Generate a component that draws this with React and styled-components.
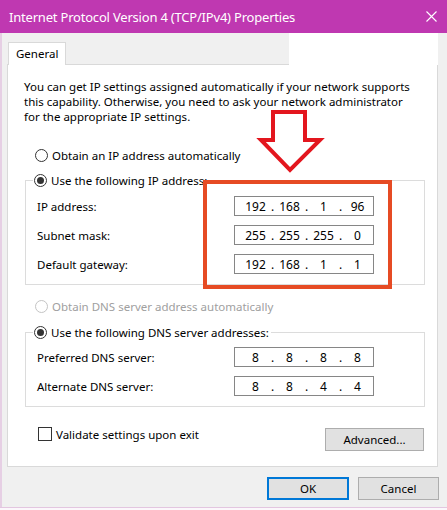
import React from "react";
import styled, { createGlobalStyle } from "styled-components";

const GlobalStyle = createGlobalStyle`
  html, body { margin: 0; padding: 0; background: #fbf7fb; }
  body {
    font-family: "Noto Sans", "Open Sans", sans-serif;
    font-size: 11.5px;
    color: #000;
  }
  * { box-sizing: border-box; }
`;

const Window = styled.div`
  position: relative;
  width: 447px;
  height: 508px;
  background: #f0f0f0;
  border-bottom: 1px solid #e3c6e0;
  display: flex;
  flex-direction: column;
`;

const TitleBar = styled.div`
  height: 33px;
  flex-shrink: 0;
  background: #bf38b1;
  color: #fff;
  display: flex;
  align-items: center;
  justify-content: space-between;
  padding: 0 10px 0 9px;
  font-size: 13px;
  letter-spacing: -0.2px;
`;

const Body = styled.div`
  flex: 1;
  border-left: 2px solid #e6cfe4;
  padding: 0 9px 0 5px;
  display: flex;
  flex-direction: column;
`;

const TabRow = styled.div`
  height: 31px;
  display: flex;
  align-items: flex-end;
`;

const Tab = styled.div`
  position: relative;
  z-index: 1;
  margin: 0 0 -1px 1px;
  height: 23px;
  width: 58px;
  padding: 3px 0 0 7px;
  background: #fff;
  border: 1px solid #d9d9d9;
  border-bottom: none;
`;

const TabFill = styled.div`
  flex: 1;
`;

const WhitePatch = styled.div`
  position: relative;
  z-index: 1;
  align-self: stretch;
  width: 149px;
  margin-bottom: -1px;
  background: #fff;
`;

const Panel = styled.div`
  height: 403px;
  background: #fff;
  border: 1px solid #d9d9d9;
  padding: 14px 13px 0 16px;
  display: flex;
  flex-direction: column;
`;

const Intro = styled.p`
  margin: 0;
  line-height: 15px;
  span { display: block; white-space: nowrap; }
`;

const RadioRow = styled.div`
  display: flex;
  align-items: center;
  gap: 4px;
  height: 16px;
  margin: ${(p) => p.$mt}px 0 0 11px;
  color: ${(p) => (p.$disabled ? "#a0a0a0" : "#000")};
`;

const RadioDot = styled.span`
  width: 13px;
  height: 13px;
  border-radius: 50%;
  border: 1px solid ${(p) => (p.$disabled ? "#c4c4c4" : "#333")};
  background: #fff;
  display: flex;
  align-items: center;
  justify-content: center;
  &::after {
    content: "";
    width: 7px;
    height: 7px;
    border-radius: 50%;
    background: ${(p) => (p.$checked ? "#333" : "transparent")};
  }
`;

const Group = styled.fieldset`
  margin: ${(p) => p.$mt}px 0 0 1px;
  width: 400px;
  border: 1px solid #dcdcdc;
  padding: ${(p) => p.$pt}px 49px 10px 11px;
  min-width: 0;
`;

const Legend = styled.legend`
  display: flex;
  align-items: center;
  gap: 4px;
  height: 16px;
  padding: 0 2px 0 1px;
  margin-left: -4px;
`;

const Fields = styled.div`
  display: grid;
  grid-template-columns: 197px 140px;
  grid-auto-rows: 20px;
  row-gap: 9px;
  align-items: center;
`;

const IpBox = styled.div`
  height: 20px;
  border: 1px solid #868686;
  background: #fff;
  display: flex;
  align-items: center;
  padding-left: 8px;
  font-size: 12px;
`;

const Octet = styled.span`
  width: 25px;
  text-align: center;
`;

const Dot = styled.span`
  width: 9px;
  text-align: center;
`;

const BottomRow = styled.div`
  margin-top: 21px;
  display: flex;
  justify-content: space-between;
  align-items: flex-start;
  padding-left: 14px;
`;

const CheckRow = styled.label`
  margin-top: -1px;
  display: flex;
  align-items: center;
  gap: 4px;
  height: 14px;
`;

const CheckBox = styled.span`
  width: 14px;
  height: 14px;
  border: 1px solid #333;
  background: #fff;
`;

const Button = styled.button`
  width: ${(p) => p.$w}px;
  height: 23px;
  background: #e1e1e1;
  border: ${(p) => (p.$default ? "2px solid #0078d7" : "1px solid #adadad")};
  font: inherit;
  color: #000;
  padding: 0;
`;

const Footer = styled.div`
  display: flex;
  justify-content: flex-end;
  gap: 9px;
  padding-top: 10px;
  margin-right: -1px;
`;

const RedBox = styled.div`
  position: absolute;
  left: 203px;
  top: 180px;
  width: 189px;
  height: 109px;
  border: 4px solid #e64b24;
`;

const ArrowSvg = styled.svg`
  position: absolute;
  left: 255px;
  top: 105px;
`;

const Radio = ({ checked, disabled }) => (
  <RadioDot $checked={checked} $disabled={disabled} />
);

const IpField = ({ value }) => {
  const parts = value.split(".");
  return (
    <IpBox>
      {parts.map((p, i) => (
        <React.Fragment key={i}>
          <Octet>{p}</Octet>
          {i < 3 && <Dot>.</Dot>}
        </React.Fragment>
      ))}
    </IpBox>
  );
};

export default function App() {
  return (
    <>
      <GlobalStyle />
      <Window>
        <TitleBar>
          <span>Internet Protocol Version 4 (TCP/IPv4) Properties</span>
          <svg width="11" height="11" viewBox="0 0 11 11">
            <path d="M0.5 0.5 L10.5 10.5 M10.5 0.5 L0.5 10.5" stroke="#fff" strokeWidth="1.1" />
          </svg>
        </TitleBar>
        <Body>
          <TabRow>
            <Tab>General</Tab>
            <TabFill />
            <WhitePatch />
          </TabRow>
          <Panel>
            <Intro>
              <span>You can get IP settings assigned automatically if your network supports</span>
              <span>this capability. Otherwise, you need to ask your network administrator</span>
              <span>for the appropriate IP settings.</span>
            </Intro>
            <RadioRow $mt={23}>
              <Radio />
              Obtain an IP address automatically
            </RadioRow>
            <Group $mt={9} $pt={8}>
              <Legend>
                <Radio checked />
                Use the following IP address:
              </Legend>
              <Fields>
                <span>IP address:</span>
                <IpField value="192.168.1.96" />
                <span>Subnet mask:</span>
                <IpField value="255.255.255.0" />
                <span>Default gateway:</span>
                <IpField value="192.168.1.1" />
              </Fields>
            </Group>
            <RadioRow $mt={13} $disabled>
              <Radio disabled />
              Obtain DNS server address automatically
            </RadioRow>
            <Group $mt={10} $pt={7}>
              <Legend>
                <Radio checked />
                Use the following DNS server addresses:
              </Legend>
              <Fields>
                <span>Preferred DNS server:</span>
                <IpField value="8.8.8.8" />
                <span>Alternate DNS server:</span>
                <IpField value="8.8.4.4" />
              </Fields>
            </Group>
            <BottomRow>
              <CheckRow>
                <CheckBox />
                Validate settings upon exit
              </CheckRow>
              <Button $w={99}>Advanced...</Button>
            </BottomRow>
          </Panel>
          <Footer>
            <Button $w={82} $default>OK</Button>
            <Button $w={81}>Cancel</Button>
          </Footer>
        </Body>
        <RedBox />
        <ArrowSvg width="72" height="72" viewBox="0 0 72 72">
          <path
            d="M18 7 L50 7 L50 35 L65 35 L35 65 L6 35 L18 35 Z"
            fill="none"
            stroke="#e3161e"
            strokeWidth="4"
          />
        </ArrowSvg>
      </Window>
    </>
  );
}
